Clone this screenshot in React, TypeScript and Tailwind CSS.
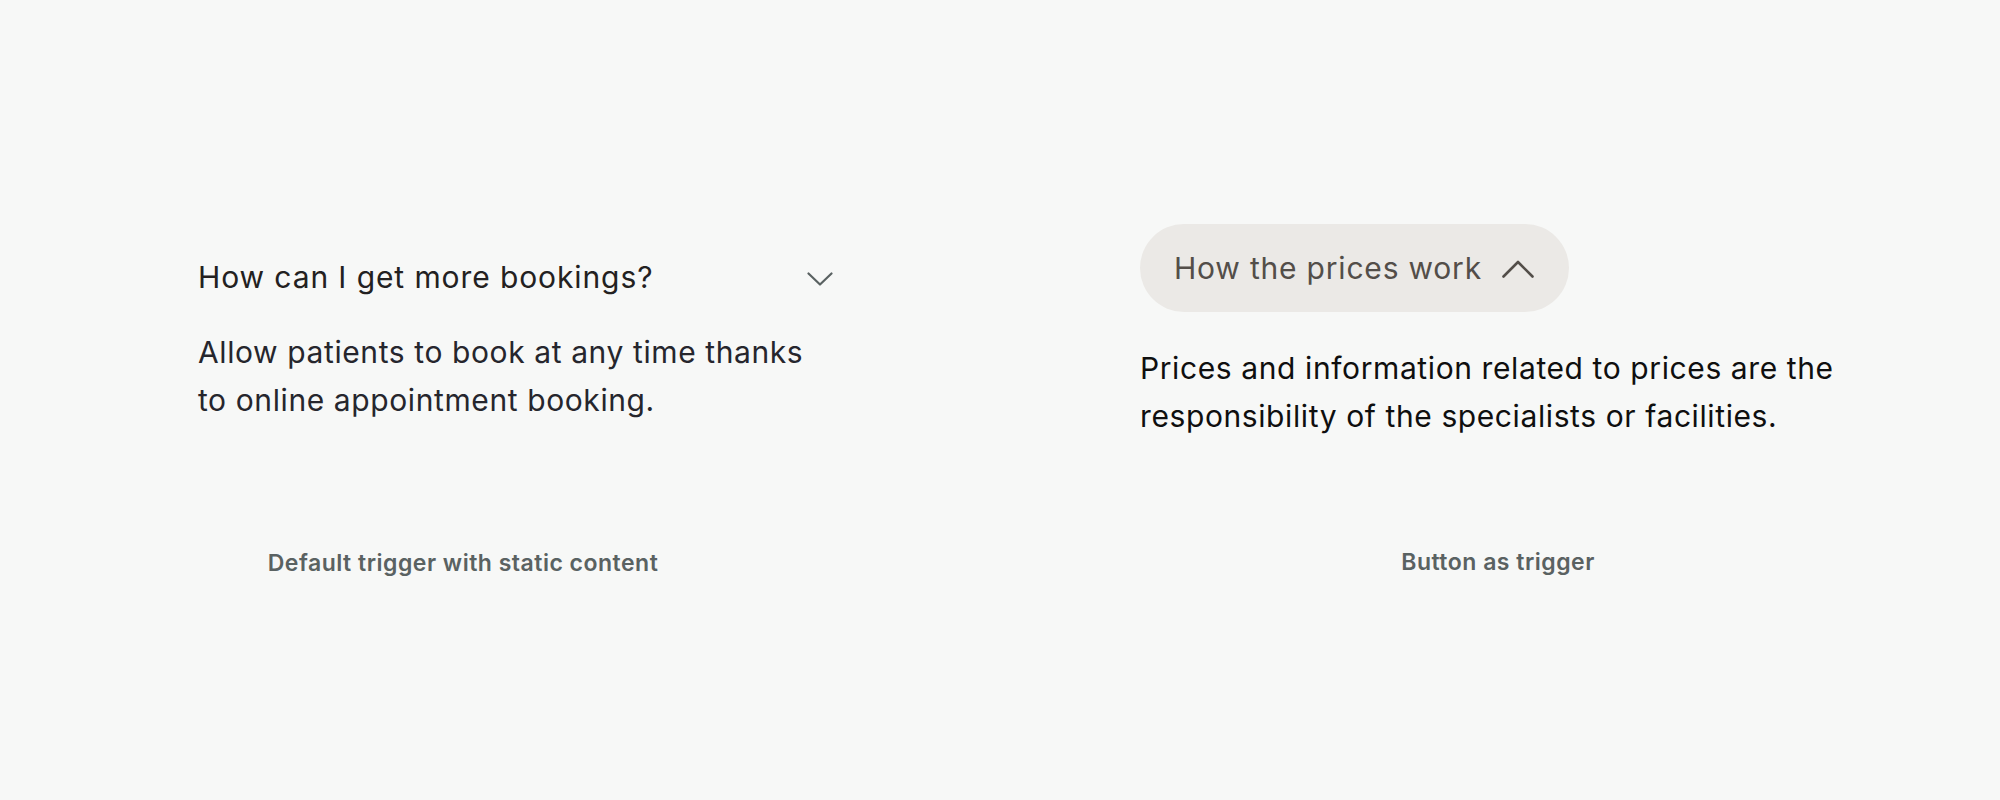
import { useState } from 'react';

function ChevronDown() {
	return (
		<svg width="26" height="14" viewBox="0 0 26 14" fill="none" className="shrink-0">
			<polyline points="1.5,1.5 13,12.5 24.5,1.5" stroke="#5a6262" strokeWidth="2.2" strokeLinecap="round" strokeLinejoin="round" />
		</svg>
	);
}

function ChevronUp() {
	return (
		<svg width="32" height="19" viewBox="0 0 32 19" fill="none" className="shrink-0">
			<polyline points="1.5,17.5 16,3 30.5,17.5" stroke="#534e49" strokeWidth="2.6" strokeLinecap="round" strokeLinejoin="round" />
		</svg>
	);
}

export default function App() {
	const [open, setOpen] = useState(true);

	return (
		<div className="min-h-[800px] w-[2000px] bg-[#f7f8f7] font-['Inter',sans-serif] flex pt-[259px]">
			{/* left cell */}
			<div className="w-[926px] flex flex-col">
				<div className="pl-[198px]">
					<div className="w-[634px]">
						<div className="flex items-center justify-between h-[36px]">
							<span className="text-[30px] leading-[36px] tracking-[0.9px] text-[#232121]">How can I get more bookings?</span>
							<span className="mr-[-1px] mt-[4px]"><ChevronDown /></span>
						</div>
						<p className="mt-[33px] text-[30px] leading-[48px] tracking-[0.6px] text-[#26262d]">
							Allow patients to book at any time thanks to online appointment booking.
						</p>
					</div>
				</div>
				<div className="mt-[125px] text-center text-[23px] leading-[28px] tracking-[0.5px] font-semibold text-[#5a6262]">
					Default trigger with static content
				</div>
			</div>

			{/* right cell */}
			<div className="ml-[70px] w-[1004px] flex flex-col -mt-[35px]">
				<div className="pl-[144px]">
					<button
						onClick={() => setOpen(!open)}
						className="h-[88px] w-[429px] rounded-full bg-[#ebe9e6] flex items-center pl-[34px] gap-[20px] text-[30px] tracking-[0.8px] text-[#534e49]"
					>
						<span>How the prices work</span>
						<ChevronUp />
					</button>
					<p className="mt-[32px] w-[720px] text-[30px] leading-[48px] tracking-[0.6px] text-[#0f0f0f]">
						Prices and information related to prices are the responsibility of the specialists or facilities.
					</p>
				</div>
				<div className="mt-[108px] text-center text-[23px] leading-[28px] tracking-[0.5px] font-semibold text-[#5a6262]">
					Button as trigger
				</div>
			</div>
		</div>
	);
}
